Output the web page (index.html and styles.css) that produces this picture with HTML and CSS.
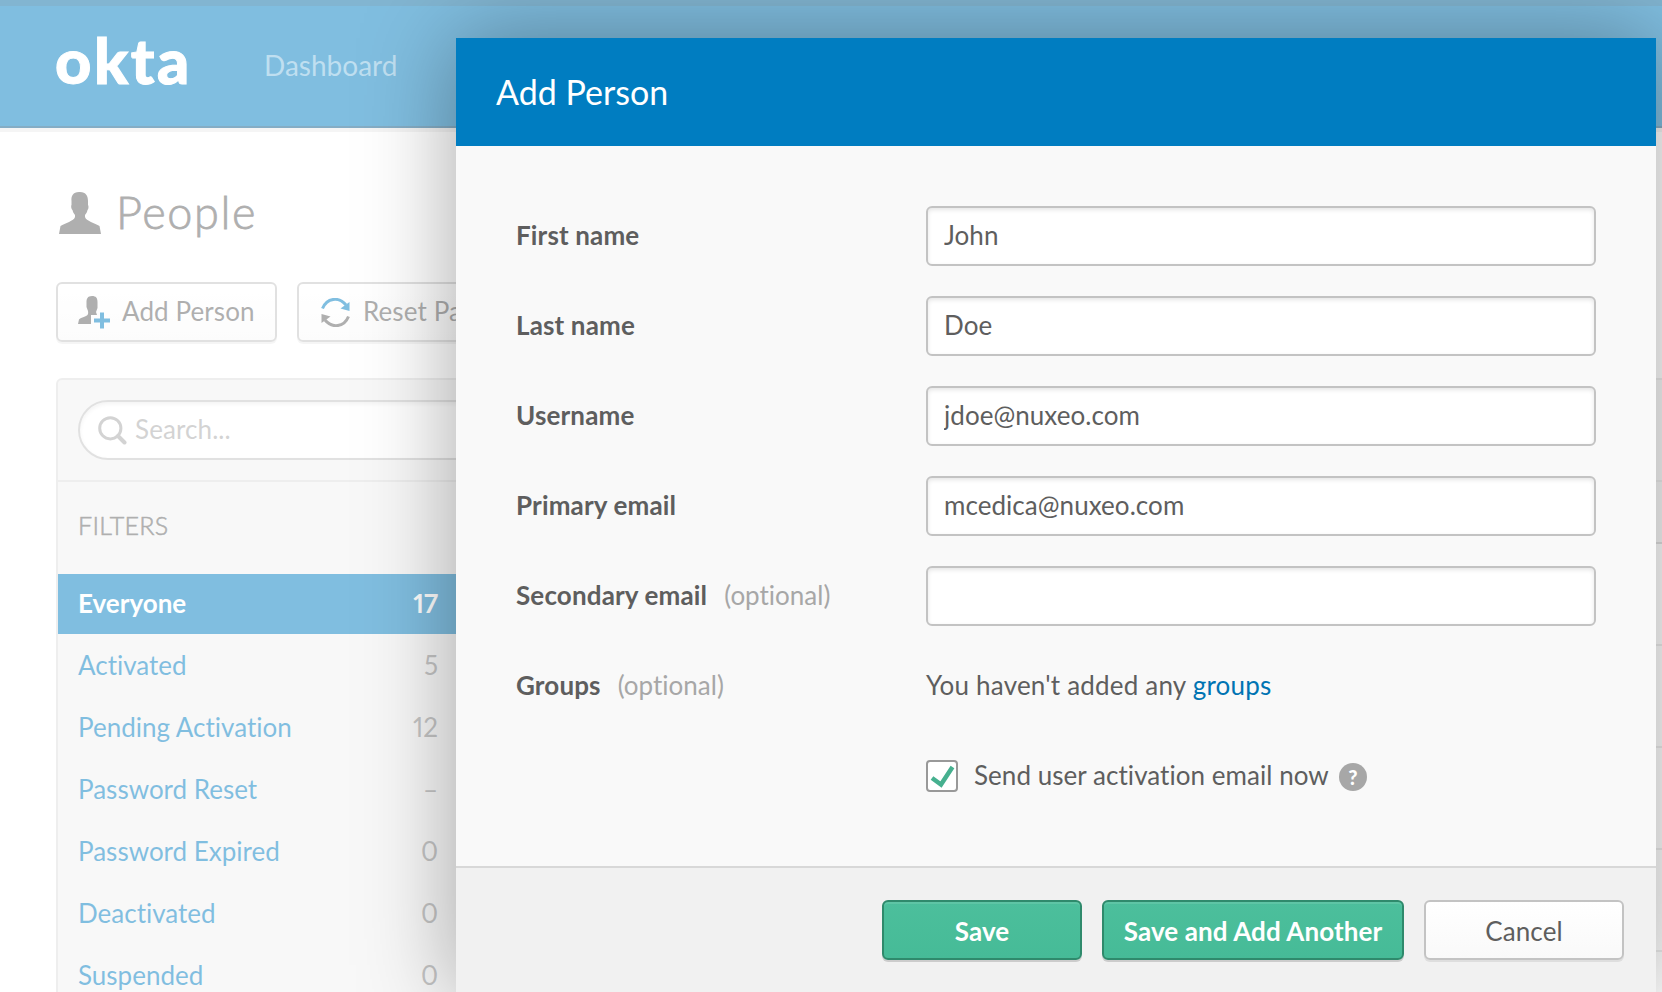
FILE: index.html
```html
<!DOCTYPE html>
<html lang="en">
  <head>
    <meta charset="utf-8" />
    <title>People</title>
    <link rel="stylesheet" href="styles.css">
  </head>

  <body>
    <div class="page">
      <div class="topbar">
        <div class="logo">okta</div>
        <a class="nav-link">Dashboard</a>
      </div>

      <div class="content">
        <h1 class="page-title">
          <svg class="title-icon" width="42" height="42" viewBox="0 0 42 42">
            <path fill="#5e5e5e" d="M20 0C14 0 12 4 12.500 9V13C12 13 12 17 13.500 18C14 21 15.500 22 16 23V25C15 29 6 31 1.500 34L0 42H42L40.500 34C36 31 27 29 26 25V23C26.500 22 28 21 28.500 18C30 17 29.500 13 29 13V9C29 4 27 0 21 0Z" />
          </svg>
          <span>People</span>
        </h1>

        <div class="actions">
          <button class="btn action add">
            <svg width="33" height="33" viewBox="0 0 33 33">
              <path fill="#5e5e5e" d="M14 0C9.500 0 8.500 3 8.500 6V11L10 15C10.500 18 10 19 8 20C5 21.500 2 22 1 23.500L0 28H13V19H19L18 16L19.500 12V6C19.500 2 18 0 14 0Z" />
              <path fill="#007dc1" d="M22 16.500h4v6h6v4h-6v6h-4v-6h-6v-4h6z" />
            </svg>
            <span>Add Person</span>
          </button>
          <button class="btn action reset">
            <svg width="29" height="29" viewBox="0 0 29 29">
              <path fill="none" stroke="#007dc1" stroke-width="3" d="M1.500 10.500C6 -0.500 18 -1.500 25 7" />
              <path fill="#007dc1" d="M28.500 4V13L19.500 10.500Z" />
              <path fill="none" stroke="#5e5e5e" stroke-width="3" d="M27.500 18.500C23 29.500 11 30.500 4 22" />
              <path fill="#5e5e5e" d="M0.500 25V16L9.500 18.500Z" />
            </svg>
            <span>Reset Passwords</span>
          </button>
        </div>

        <div class="panel">
          <div class="search-wrap">
            <div class="search">
              <svg width="29" height="29" viewBox="0 0 29 29" fill="none" stroke="#a7a7a7">
                <circle cx="12.300" cy="12.300" r="10.600" stroke-width="3" />
                <path d="M20 20L26.500 26.500" stroke-width="4" stroke-linecap="round" />
              </svg>
              <span>Search...</span>
            </div>
          </div>
          <div class="panel-main">
            <div class="sidebar">
              <h2 class="filters-title">FILTERS</h2>
              <ul class="filters">
                <li class="active"><span>Everyone</span><span class="count">17</span></li>
                <li><span>Activated</span><span class="count">5</span></li>
                <li><span>Pending Activation</span><span class="count">12</span></li>
                <li><span>Password Reset</span><span class="count">–</span></li>
                <li><span>Password Expired</span><span class="count">0</span></li>
                <li><span>Deactivated</span><span class="count">0</span></li>
                <li><span>Suspended</span><span class="count">0</span></li>
              </ul>
            </div>
            <div class="people-table">
              <div class="table-head"></div>
              <div class="table-row"></div>
              <div class="table-row"></div>
              <div class="table-row"></div>
              <div class="table-row"></div>
              <div class="table-row"></div>
            </div>
          </div>
        </div>
      </div>
    </div>

    <div class="overlay"></div>

    <div class="modal">
      <div class="modal-header">Add Person</div>

      <form class="modal-body">
        <div class="row">
          <label>First name</label>
          <input class="field" type="text" value="John">
        </div>
        <div class="row">
          <label>Last name</label>
          <input class="field" type="text" value="Doe">
        </div>
        <div class="row">
          <label>Username</label>
          <input class="field" type="text" value="jdoe@nuxeo.com">
        </div>
        <div class="row">
          <label>Primary email</label>
          <input class="field" type="text" value="mcedica@nuxeo.com">
        </div>
        <div class="row">
          <label>Secondary email</label><span class="optional">(optional)</span>
          <input class="field" type="text" value="">
        </div>
        <div class="row">
          <label>Groups</label><span class="optional">(optional)</span>
          <div class="value">You haven't added any <a class="link">groups</a></div>
        </div>
        <div class="row">
          <div class="value check-row">
            <span class="checkbox">
              <svg width="28" height="28" viewBox="0 0 28 28">
                <path fill="none" stroke="#46b08f" stroke-width="4.500" d="M4 16L13 22.500L24.500 5" />
              </svg>
            </span>
            <span class="send">Send user activation email now</span>
            <span class="help">?</span>
          </div>
        </div>
      </form>

      <div class="modal-footer">
        <button class="btn save">Save</button>
        <button class="btn save another">Save and Add Another</button>
        <button class="btn cancel">Cancel</button>
      </div>
    </div>
  </body>
</html>
```

FILE: styles.css
```css
* {
  box-sizing: border-box;
}

body {
  margin: 0;
  height: 992px;
  overflow: hidden;
  position: relative;
  background-color: #fff;
  color: #5e5e5e;
  font-family: Lato, "Open Sans", sans-serif;
  font-size: 26px;
  letter-spacing: 0.1px;
  font-variant-ligatures: none;
}

.page {
  height: 992px;
  overflow: hidden;
}

.topbar {
  height: 128px;
  display: flex;
  align-items: flex-start;
  padding-left: 55px;
  background-color: #007dc1;
  border-top: 6px solid #046aa2;
  border-bottom: 2px solid #0a5a8a;
  box-shadow: 0 4px 0 #eaeaea;
}

.logo {
  width: 209px;
  padding-top: 17px;
  color: #fff;
  font-size: 63px;
  line-height: 74px;
  font-weight: 900;
  letter-spacing: 2.5px;
  -webkit-text-stroke: 1px #fff;
}

.nav-link {
  padding-top: 42px;
  color: #7fbee0;
  font-size: 28px;
  line-height: 34px;
  letter-spacing: 0;
}

.content {
  padding: 64px 0 0 56px;
}

.page-title {
  display: flex;
  align-items: center;
  gap: 15px;
  height: 42px;
  margin: 0 0 48px;
  padding-left: 3px;
  font-size: 45px;
  font-weight: 300;
  letter-spacing: 1.6px;
  -webkit-text-stroke: 0.8px #5e5e5e;
}

.page-title span {
  padding-bottom: 3px;
}

.actions {
  display: flex;
  gap: 20px;
  margin-bottom: 36px;
}

.btn {
  height: 60px;
  padding: 0;
  border: 2px solid #c3c3c3;
  border-radius: 6px;
  background: linear-gradient(#fff, #f9f9f9);
  box-shadow: 0 2px 0 rgba(0, 0, 0, 0.08);
  color: #5e5e5e;
  font-family: inherit;
  font-size: 26px;
  letter-spacing: inherit;
}

.action {
  display: flex;
  align-items: center;
  gap: 11px;
  padding-left: 20px;
}

.action span {
  padding-bottom: 2px;
}

.add {
  width: 221px;
}

.reset {
  width: 280px;
  padding-left: 22px;
  gap: 13px;
}

.panel {
  width: 1700px;
  height: 700px;
  background-color: #f1f1f1;
  border: 2px solid #dddddd;
  border-radius: 6px;
}

.search-wrap {
  height: 102px;
  padding: 20px;
  border-bottom: 2px solid #dddddd;
}

.search {
  display: flex;
  align-items: center;
  gap: 8px;
  width: 600px;
  height: 60px;
  padding-left: 18px;
  border: 2px solid #c3c3c3;
  border-radius: 30px;
  background-color: #fff;
  box-shadow: inset 0 2px 4px rgba(0, 0, 0, 0.1);
  color: #a7a7a7;
}

.search span {
  padding-bottom: 2px;
}

.panel-main {
  display: flex;
}

.sidebar {
  width: 400px;
}

.people-table {
  flex: 1;
  background-color: #fff;
}

.table-head {
  height: 62px;
  background-color: #f1f1f1;
  border-bottom: 2px solid #c3c3c3;
}

.table-row {
  height: 102px;
  border-bottom: 2px solid #dddddd;
}

.filters-title {
  margin: 0;
  padding: 28px 0 0 20px;
  height: 92px;
  font-size: 25px;
  line-height: 30px;
  font-weight: 300;
  letter-spacing: 0.3px;
  -webkit-text-stroke: 0.6px #5e5e5e;
}

.filters {
  margin: 0;
  padding: 0;
  list-style: none;
  font-variant-numeric: proportional-nums;
  letter-spacing: 0;
}

.filters li {
  display: flex;
  justify-content: space-between;
  height: 62px;
  padding: 0 20px;
  line-height: 61px;
  color: #007dc1;
}

.filters .active {
  height: 60px;
  margin-bottom: 1px;
  line-height: 59px;
  background-color: #007dc1;
  color: #fff;
  font-weight: 700;
}

.filters .count {
  color: #8a8a8a;
}

.filters .active .count {
  color: #fff;
}

.overlay {
  position: absolute;
  inset: 0;
  background-color: rgba(255, 255, 255, 0.5);
}

.modal {
  position: absolute;
  top: 38px;
  left: 456px;
  width: 1200px;
  height: 958px;
  background-color: #f9f9f9;
  box-shadow: 0 0 88px rgba(0, 0, 0, 0.35);
}

.modal-header {
  height: 108px;
  padding-left: 40px;
  background-color: #007dc1;
  color: #fff;
  font-size: 34px;
  line-height: 107px;
  letter-spacing: 0;
}

.modal-body {
  display: flex;
  flex-direction: column;
  gap: 30px;
  height: 720px;
  padding: 60px 60px 0;
}

.row {
  display: flex;
  align-items: center;
  height: 60px;
}

.row label {
  padding-bottom: 2px;
  font-weight: 700;
  letter-spacing: 0.15px;
}

.optional {
  margin-left: 17px;
  padding-bottom: 2px;
  color: #a7a7a7;
  letter-spacing: 0;
}

.field,
.value {
  width: 670px;
  height: 60px;
  margin-left: auto;
}

.field {
  padding: 0 16px 2px;
  border: 2px solid #c3c3c3;
  border-radius: 6px;
  background-color: #fff;
  box-shadow: inset 0 2px 4px rgba(0, 0, 0, 0.1);
  color: #5e5e5e;
  font-family: inherit;
  font-size: 26px;
  letter-spacing: 0.05px;
}

.value {
  line-height: 59px;
  letter-spacing: 0.2px;
}

.link {
  color: #0074b3;
}

.check-row {
  display: flex;
  align-items: center;
}

.checkbox {
  width: 32px;
  height: 32px;
  margin-right: 16px;
  border: 2px solid #999;
  border-radius: 4px;
  background-color: #fff;
}

.checkbox svg {
  display: block;
}

.send {
  padding-bottom: 2px;
  letter-spacing: 0.05px;
}

.help {
  width: 28px;
  height: 28px;
  margin: 2px 0 0 10px;
  border-radius: 50%;
  background-color: #a7a7a7;
  color: #fff;
  font-size: 20px;
  line-height: 28px;
  font-weight: 900;
  letter-spacing: 0;
  text-align: center;
}

.modal-footer {
  display: flex;
  justify-content: flex-end;
  gap: 20px;
  height: 130px;
  padding: 32px 32px 0;
  border-top: 2px solid #d8d8d8;
  background-color: #f1f1f1;
}

.modal-footer .btn {
  padding-top: 2px;
}

.save {
  width: 200px;
  border-color: #2f8a6c;
  background: linear-gradient(#4cbf9c, #46bb97);
  box-shadow: inset 0 2px 0 #5ec5a5, 0 2px 0 #cccccc;
  color: #fff;
  font-weight: 700;
}

.another {
  width: 302px;
}

.cancel {
  width: 200px;
}
```
